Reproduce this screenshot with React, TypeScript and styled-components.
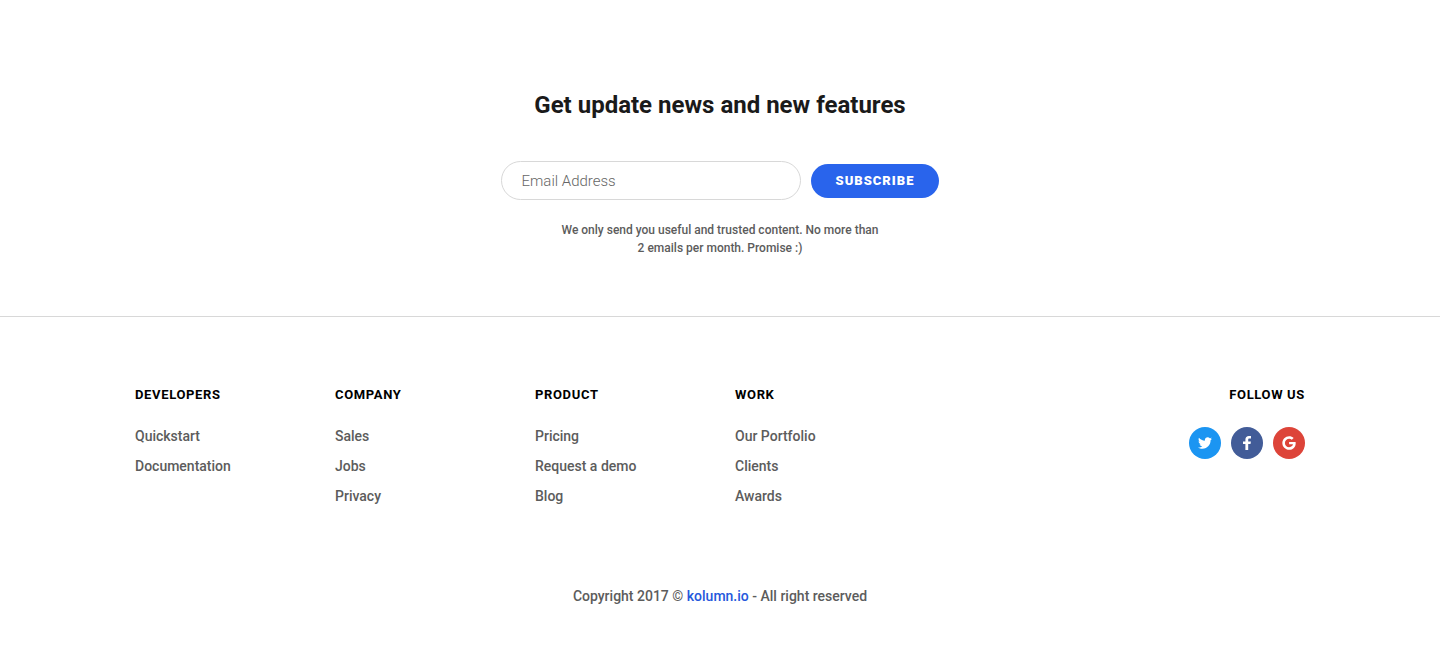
import React from 'react';
import styled, { createGlobalStyle } from 'styled-components';
import { FaTwitter, FaGoogle } from 'react-icons/fa';

const GlobalStyle = createGlobalStyle`
  *, *::before, *::after { box-sizing: border-box; }
  body {
    margin: 0;
    background: #fff;
    color: #5c5c5c;
    font-family: Roboto, "Liberation Sans", sans-serif;
    font-size: 14px;
    line-height: 18px;
    font-weight: 500;
  }
`;

const Newsletter = styled.section`
  display: flex;
  flex-direction: column;
  align-items: center;
  padding: 88px 20px 59px;
  border-bottom: 1px solid #d8d8d8;
  text-align: center;
`;

const Title = styled.h2`
  margin: 0;
  color: #1a1a1a;
  font-size: 24px;
  line-height: 34px;
  font-weight: 700;
`;

const Form = styled.form`
  display: flex;
  align-items: center;
  gap: 10px;
  margin-top: 39px;
`;

const EmailInput = styled.input`
  width: 300px;
  height: 39px;
  padding: 0 20px;
  border: 1px solid #d8d8d8;
  border-radius: 20px;
  background: #fff;
  color: #333;
  font-family: inherit;
  font-size: 15px;
  font-weight: 300;
  &::placeholder { color: #666; opacity: 1; }
`;

const SubscribeButton = styled.button`
  height: 34px;
  padding: 0 25px;
  border: 0;
  border-radius: 17px;
  background: #2964ec;
  color: #fff;
  font-family: inherit;
  font-size: 13px;
  font-weight: 900;
  letter-spacing: 1px;
  text-transform: uppercase;
  cursor: pointer;
`;

const Note = styled.p`
  max-width: 322px;
  margin: 21px 0 0;
  font-size: 12px;
`;

const Footer = styled.footer`
  max-width: 1210px;
  margin: 0 auto;
  padding: 68px 20px 40px;
`;

const Columns = styled.div`
  display: flex;
  flex-wrap: wrap;
`;

const Column = styled.nav`
  width: 200px;
`;

const Heading = styled.h3`
  margin: 0 0 22px;
  color: #000;
  font-size: 13px;
  line-height: 20px;
  font-weight: 700;
  letter-spacing: 0.05em;
  text-transform: uppercase;
`;

const LinkList = styled.ul`
  display: flex;
  flex-direction: column;
  gap: 12px;
  margin: 0;
  padding: 0;
  list-style: none;
`;

const FooterLink = styled.a`
  color: inherit;
  text-decoration: none;
`;

const Follow = styled.div`
  margin-left: auto;
  text-align: right;
`;

const SocialRow = styled.div`
  display: flex;
  justify-content: flex-end;
  gap: 10px;
`;

const SocialLink = styled.a<{ $color: string }>`
  display: flex;
  align-items: center;
  justify-content: center;
  width: 32px;
  height: 32px;
  border-radius: 50%;
  background: ${(p) => p.$color};
  color: #fff;
`;

const Copyright = styled.p`
  margin: 82px 0 0;
  text-align: center;
`;

const BrandLink = styled.a`
  color: #2558dc;
  text-decoration: none;
`;

const FacebookIcon = () => (
  <svg width="16" height="16" viewBox="0 0 16 16" fill="currentColor" aria-hidden="true">
    <path d="M6.4 15V8.9H4V6.4h2.4V4.5C6.4 2.2 7.8 1 9.9 1c1 0 1.8.1 2.1.1v2.3h-1.4c-1.1 0-1.4.5-1.4 1.3v1.7h2.7l-.4 2.5H9.2V15z" />
  </svg>
);

const columns = [
  { title: 'Developers', links: ['Quickstart', 'Documentation'] },
  { title: 'Company', links: ['Sales', 'Jobs', 'Privacy'] },
  { title: 'Product', links: ['Pricing', 'Request a demo', 'Blog'] },
  { title: 'Work', links: ['Our Portfolio', 'Clients', 'Awards'] },
];

const socials = [
  { name: 'Twitter', color: '#1b95f2', icon: <FaTwitter size={14} /> },
  { name: 'Facebook', color: '#425c98', icon: <FacebookIcon /> },
  { name: 'Google', color: '#dd4439', icon: <FaGoogle size={14} /> },
];

export default function App() {
  return (
    <>
      <GlobalStyle />
      <Newsletter>
        <Title>Get update news and new features</Title>
        <Form onSubmit={(e) => e.preventDefault()}>
          <EmailInput type="email" aria-label="Email Address" placeholder="Email Address" />
          <SubscribeButton type="submit">Subscribe</SubscribeButton>
        </Form>
        <Note>We only send you useful and trusted content. No more than 2 emails per month. Promise :)</Note>
      </Newsletter>
      <Footer>
        <Columns>
          {columns.map((column) => (
            <Column key={column.title} aria-label={column.title}>
              <Heading>{column.title}</Heading>
              <LinkList>
                {column.links.map((link) => (
                  <li key={link}><FooterLink href="#">{link}</FooterLink></li>
                ))}
              </LinkList>
            </Column>
          ))}
          <Follow>
            <Heading>Follow us</Heading>
            <SocialRow>
              {socials.map((s) => (
                <SocialLink key={s.name} href="#" aria-label={s.name} $color={s.color}>{s.icon}</SocialLink>
              ))}
            </SocialRow>
          </Follow>
        </Columns>
        <Copyright>
          Copyright 2017 © <BrandLink href="#">kolumn.io</BrandLink> - All right reserved
        </Copyright>
      </Footer>
    </>
  );
}
